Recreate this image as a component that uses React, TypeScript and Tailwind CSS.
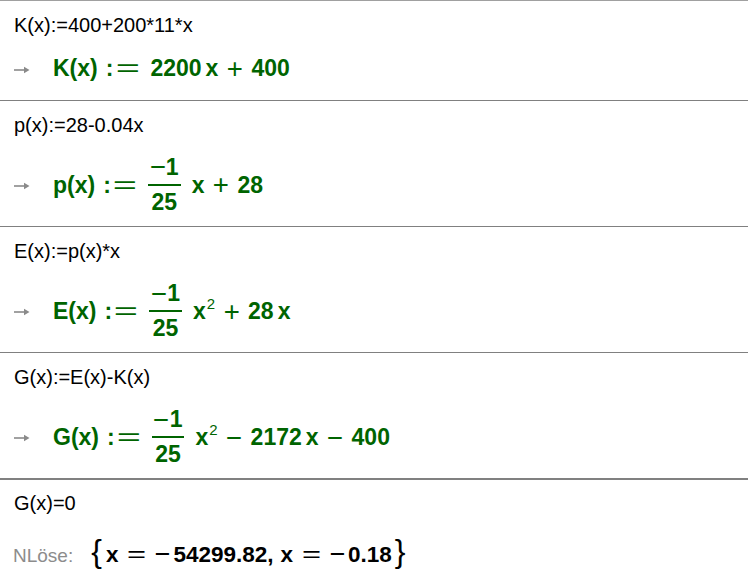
import React from 'react';

const sans = "font-['Liberation_Sans',Arial,sans-serif]";

function Arrow() {
    return (
        <svg width="16" height="10" viewBox="0 0 16 10" className="mt-[2px] shrink-0">
            <path d="M0 5h12" stroke="#8a8a8a" strokeWidth="1.6" />
            <path d="M10 1.8L15.5 5 10 8.2z" fill="#8a8a8a" />
        </svg>
    );
}

function Frac({ n, d }: { n: React.ReactNode; d: React.ReactNode }) {
    return (
        <span className="mr-[11px] inline-flex flex-col items-center">
            <span className="flex items-center px-[2px]">{n}</span>
            <span className="my-[5px] h-[2px] w-full bg-[#006400]" />
            <span className="px-[2px]">{d}</span>
        </span>
    );
}

// wide, thin minus as drawn by the math renderer
function Neg({ gap = 'mr-[1px]' }: { gap?: string }) {
    return (
        <span className={`${gap} inline-block w-[15px] text-center font-normal`}>
            <span className="inline-block scale-[1.2]">−</span>
        </span>
    );
}

function Op({ children }: { children: React.ReactNode }) {
    return (
        <span className="mx-[9px] inline-block w-[15px] text-center font-normal">
            <span className="inline-block scale-[1.2]">{children}</span>
        </span>
    );
}

function Sup({ children }: { children: React.ReactNode }) {
    return <span className="relative -top-[8px] ml-[1px] text-[15px] font-normal">{children}</span>;
}

// number times x, with the thin gap the renderer uses
function Term({ num }: { num: string }) {
    return (
        <>
            <span>{num}</span>
            <span className="ml-[4px]">x</span>
        </>
    );
}

function Def({ name }: { name: string }) {
    return (
        <>
            <span>{name}</span>
            <span className="ml-[8px]">:</span>
            <span className="ml-[2px] mr-[11px] inline-block w-[24px] text-center font-normal">
                <span className="inline-block scale-x-[1.8]">=</span>
            </span>
        </>
    );
}

function Rel() {
    return (
        <span className="mx-[10px] inline-block w-[17px] text-center">
            <span className="inline-block scale-x-[1.45]">=</span>
        </span>
    );
}

function Row(props: { input: string; h: string; mt: string; last?: boolean; children: React.ReactNode }) {
    const { input, h, mt, last, children } = props;
    return (
        <div className={`${h} ${last ? 'border-b-2' : 'border-b'} border-[#808080] pt-[12px]`}>
            <div className="pl-[14px] text-[20px] leading-[24px] text-black">{input}</div>
            <div className={`${mt} flex items-center pl-[14px]`}>
                <Arrow />
                <div className="ml-[23px] flex items-center text-[23px] font-bold leading-none text-[#006400]">
                    {children}
                </div>
            </div>
        </div>
    );
}

export default function App() {
    return (
        <div className={`${sans} h-[576px] w-[748px] overflow-hidden border-t border-[#a0a0a0] bg-white`}>
            <Row input="K(x):=400+200*11*x" h="h-[100px]" mt="mt-[20px]">
                <Def name="K(x)" />
                <Term num="2200" />
                <Op>+</Op>
                <span>400</span>
            </Row>

            <Row input="p(x):=28-0.04x" h="h-[126px]" mt="mt-[19px]">
                <Def name="p(x)" />
                <Frac n={<><Neg />1</>} d="25" />
                <span>x</span>
                <Op>+</Op>
                <span>28</span>
            </Row>

            <Row input="E(x):=p(x)*x" h="h-[126px]" mt="mt-[19px]">
                <Def name="E(x)" />
                <Frac n={<><Neg />1</>} d="25" />
                <span>x</span>
                <Sup>2</Sup>
                <Op>+</Op>
                <Term num="28" />
            </Row>

            <Row input="G(x):=E(x)-K(x)" h="h-[127px]" mt="mt-[19px]" last>
                <Def name="G(x)" />
                <Frac n={<><Neg />1</>} d="25" />
                <span>x</span>
                <Sup>2</Sup>
                <Op>−</Op>
                <Term num="2172" />
                <Op>−</Op>
                <span>400</span>
            </Row>

            <div className="pt-[11px]">
                <div className="pl-[14px] text-[20px] leading-[24px] text-black">G(x)=0</div>
                <div className="mt-[20px] flex items-baseline pl-[13px]">
                    <span className="text-[19px] leading-none text-[#8c8c8c]">NLöse:</span>
                    <span className="ml-[18px] flex items-baseline text-[22.5px] leading-none text-black">
                        <span className="mr-[4px] text-[32px]">{'{'}</span>
                        <span className="font-bold">x</span>
                        <Rel />
                        <Neg gap="mr-[3px]" />
                        <span className="font-bold">54299.82,</span>
                        <span className="ml-[7px] font-bold">x</span>
                        <Rel />
                        <Neg gap="mr-[3px]" />
                        <span className="font-bold">0.18</span>
                        <span className="ml-[3px] text-[32px]">{'}'}</span>
                    </span>
                </div>
            </div>
        </div>
    );
}
